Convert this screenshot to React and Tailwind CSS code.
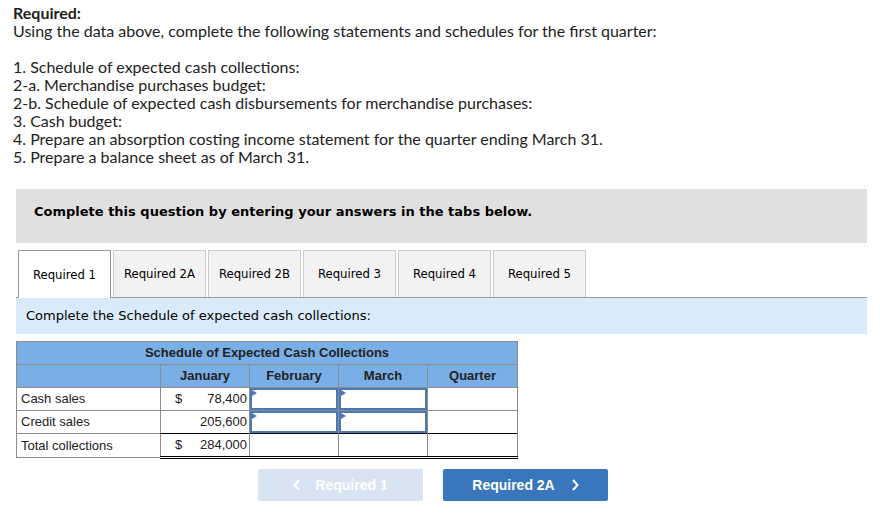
import React from 'react';

const TABS = ['Required 1', 'Required 2A', 'Required 2B', 'Required 3', 'Required 4', 'Required 5'];

const ITEMS = [
  '1. Schedule of expected cash collections:',
  '2-a. Merchandise purchases budget:',
  '2-b. Schedule of expected cash disbursements for merchandise purchases:',
  '3. Cash budget:',
  '4. Prepare an absorption costing income statement for the quarter ending March 31.',
  '5. Prepare a balance sheet as of March 31.',
];

function InputCell() {
  return (
    <td className="border border-[#8c8c8c] p-0 h-[23px]">
      <div className="relative h-[22px] border-2 border-[#4a78b5]">
        <span className="absolute left-0 top-0 w-0 h-0 border-t-[3px] border-b-[3px] border-l-[5px] border-t-transparent border-b-transparent border-l-[#4a78b5]" />
      </div>
    </td>
  );
}

export default function App() {
  return (
    <div className="w-[880px] h-[524px] bg-white overflow-hidden text-[#222]">
      {/* Question text */}
      <div className="pl-[13px] pt-[4px] font-['Lato',sans-serif] text-[16px] leading-[18px]">
        <p className="font-bold">Required:</p>
        <p>Using the data above, complete the following statements and schedules for the first quarter:</p>
        <div className="mt-[18px]">
          {ITEMS.map((t) => (
            <p key={t}>{t}</p>
          ))}
        </div>
      </div>

      {/* Instruction box */}
      <div className="mx-[16px] mt-[23px] w-[851px] h-[54px] bg-[#e0e0e0] flex items-center pl-[18px] pb-[8px] font-['DejaVu_Sans',sans-serif] font-bold text-[13px] text-black">
        Complete this question by entering your answers in the tabs below.
      </div>

      {/* Tabs */}
      <div className="mx-[16px] mt-[7px] w-[851px] flex items-end gap-[2px] pl-[2px] border-b border-[#999] h-[48px] font-['DejaVu_Sans_Condensed','DejaVu_Sans',sans-serif] text-[13px] text-black">
        {TABS.map((t, i) => (
          <div
            key={t}
            className={
              i === 0
                ? 'w-[93px] h-[48px] -mb-px bg-white border border-b-0 border-[#999] flex items-center justify-center'
                : 'w-[93px] h-[47px] bg-[#f2f2f2] border border-b-0 border-[#ccc] flex items-center justify-center'
            }
          >
            {t}
          </div>
        ))}
      </div>
      <div className="mx-[16px] w-[851px] h-[36px] bg-[#d9ebf8] flex items-center pl-[10px] font-['DejaVu_Sans',sans-serif] text-[13px] text-black">
        Complete the Schedule of expected cash collections:
      </div>

      {/* Schedule table */}
      <table className="ml-[16px] mt-[7px] border-collapse font-['Liberation_Sans',Arial,sans-serif] text-[13px] text-[#222] table-fixed w-[501px]">
        <colgroup>
          <col className="w-[144px]" />
          <col className="w-[89px]" />
          <col className="w-[89px]" />
          <col className="w-[89px]" />
          <col className="w-[90px]" />
        </colgroup>
        <thead>
          <tr className="bg-[#7aaee6]">
            <th colSpan={5} className="h-[23px] border border-[#8c8c8c] font-bold text-center text-[#222]">
              Schedule of Expected Cash Collections
            </th>
          </tr>
          <tr className="bg-[#7aaee6]">
            <th className="h-[23px] border border-[#8c8c8c]" />
            <th className="border border-[#8c8c8c] font-bold">January</th>
            <th className="border border-[#8c8c8c] font-bold">February</th>
            <th className="border border-[#8c8c8c] font-bold">March</th>
            <th className="border border-[#8c8c8c] font-bold">Quarter</th>
          </tr>
        </thead>
        <tbody>
          <tr>
            <td className="h-[23px] border border-[#8c8c8c] pl-[4px]">Cash sales</td>
            <td className="border border-[#8c8c8c] px-[2px]">
              <div className="flex justify-between pl-[12px]">
                <span>$</span>
                <span>78,400</span>
              </div>
            </td>
            <InputCell />
            <InputCell />
            <td className="border border-[#8c8c8c]" />
          </tr>
          <tr>
            <td className="h-[23px] border border-[#8c8c8c] pl-[4px]">Credit sales</td>
            <td className="border border-[#8c8c8c] px-[2px] text-right">205,600</td>
            <InputCell />
            <InputCell />
            <td className="border border-[#8c8c8c]" />
          </tr>
          <tr>
            <td className="h-[24px] border border-[#8c8c8c] pl-[4px]">Total collections</td>
            <td className="border-x border-[#8c8c8c] border-t border-t-black border-b-[3px] border-b-black border-double px-[2px]">
              <div className="flex justify-between pl-[12px]">
                <span>$</span>
                <span>284,000</span>
              </div>
            </td>
            <td className="border-x border-[#8c8c8c] border-t border-t-black border-b-[3px] border-b-black border-double" />
            <td className="border-x border-[#8c8c8c] border-t border-t-black border-b-[3px] border-b-black border-double" />
            <td className="border-x border-[#8c8c8c] border-t border-t-black border-b-[3px] border-b-black border-double" />
          </tr>
        </tbody>
      </table>

      {/* Navigation */}
      <div className="mt-[10px] ml-[258px] flex gap-[20px] font-['Liberation_Sans',Arial,sans-serif] font-bold text-[14px] text-white">
        <button className="w-[165px] h-[32px] rounded-[2px] bg-[#d9e4f2] flex items-center justify-center gap-[14px]">
          <svg width="8" height="12" viewBox="0 0 8 12" fill="none" stroke="white" strokeWidth="2">
            <path d="M6 1L1.5 6L6 11" />
          </svg>
          <span>Required 1</span>
        </button>
        <button className="w-[165px] h-[32px] rounded-[2px] bg-[#3a76bc] flex items-center justify-center gap-[16px]">
          <span>Required 2A</span>
          <svg width="8" height="12" viewBox="0 0 8 12" fill="none" stroke="white" strokeWidth="2">
            <path d="M2 1L6.5 6L2 11" />
          </svg>
        </button>
      </div>
    </div>
  );
}
